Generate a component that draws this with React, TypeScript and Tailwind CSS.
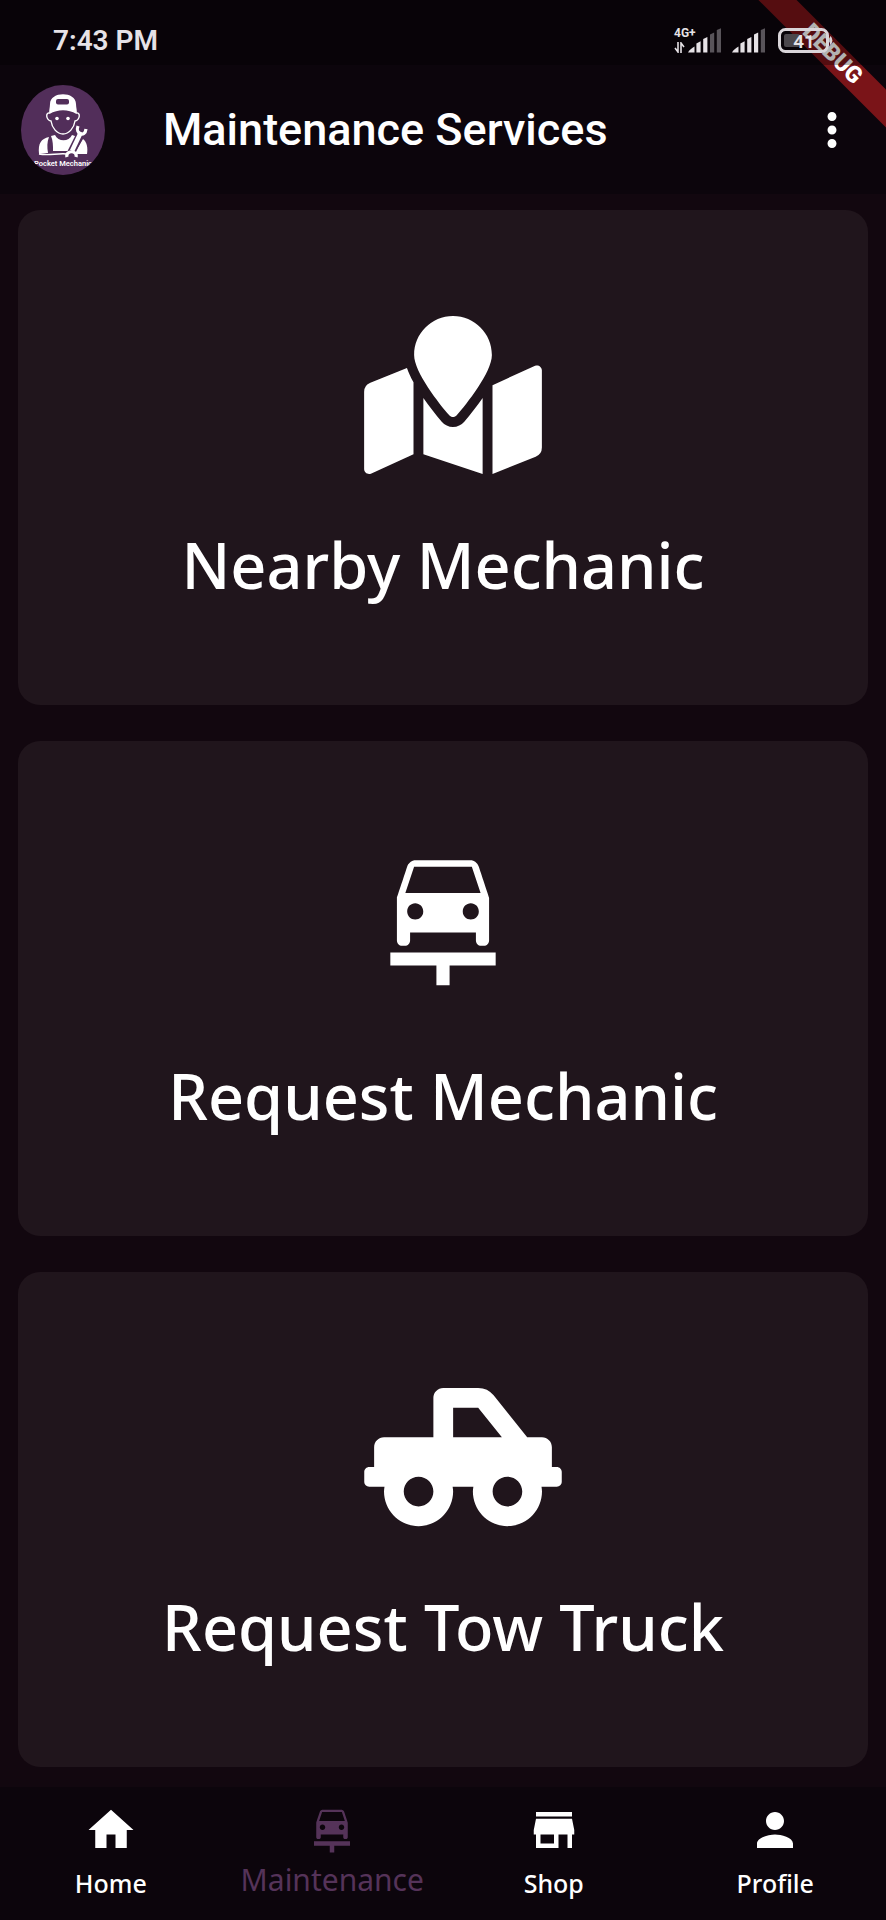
import { FaMapMarked, FaTruckPickup } from "react-icons/fa";
import { MdCarRepair, MdHome, MdStore, MdPerson, MdMoreVert } from "react-icons/md";

const cards = [
  { label: "Nearby Mechanic", icon: <FaMapMarked className="h-[158px] w-[178px] shrink-0" /> },
  { label: "Request Mechanic", icon: <MdCarRepair viewBox="0 1 24 24" className="size-[158px] shrink-0" /> },
  { label: "Request Tow Truck", icon: <FaTruckPickup className="h-[158px] w-[198px] shrink-0" /> },
];

const tabs = [
  { label: "Home", Icon: MdHome, active: false },
  { label: "Maintenance", Icon: MdCarRepair, active: true },
  { label: "Shop", Icon: MdStore, active: false },
  { label: "Profile", Icon: MdPerson, active: false },
];

function Signal({ lit }: { lit: number }) {
  return (
    <svg viewBox="0 0 34 25" className="h-[25px] w-[34px]" aria-hidden="true">
      <path d="M0 24.5C1 22 4 20 6.500 18.500V24.500Z" fill="#e6e2e6" />
      {[1, 2, 3, 4].map((i) => (
        <path
          key={i}
          d={`M${i * 6.8 + 1.6} 24.500V${20 - i * 4.500}L${i * 6.8 + 5.8} ${17.500 - i * 4.300}V24.500Z`}
          fill={i < lit ? "#e6e2e6" : "#59545a"}
        />
      ))}
    </svg>
  );
}

function Battery() {
  return (
    <svg viewBox="0 0 57 25" className="h-[25px] w-[57px]" role="img" aria-label="Battery 41 percent">
      <rect x="1.500" y="1.500" width="48" height="22" rx="6" fill="none" stroke="#d9d5d9" strokeWidth="3" />
      <rect x="6" y="6" width="16" height="13" rx="2" fill="#4b474c" />
      <path d="M52 8C55 9 55 16 52 17Z" fill="#d9d5d9" />
      <text x="26" y="19.500" textAnchor="middle" fontSize="19" fontWeight="600" fill="#e6e2e6">41</text>
    </svg>
  );
}

function Logo() {
  return (
    <svg viewBox="0 0 84 90" className="h-[90px] w-[84px] shrink-0" role="img" aria-label="Pocket Mechanic">
      <defs>
        <clipPath id="disc"><ellipse cx="42" cy="45" rx="42" ry="45" /></clipPath>
      </defs>
      <g clipPath="url(#disc)">
        <rect width="84" height="90" fill="#522e5a" />
        <path d="M28.500 29C27.500 26 29 23 29 19C29 6 55 6 55 19C55 23 56.500 26 55.500 29C47 24 37 24 28.500 29Z" fill="#fff" />
        <rect x="35" y="14" width="13" height="5.500" rx="2" fill="#522e5a" />
        <path d="M29 28C24 27 25 35 30 36C31 43 36 49 42 49S53 43 54 36C59 35 60 27 55 28" fill="none" stroke="#fff" strokeWidth="1.400" />
        <circle cx="36" cy="33.500" r="1.800" fill="#fff" />
        <circle cx="47" cy="33.500" r="1.800" fill="#fff" />
        <path d="M18 69C17 58 20 54 28 52C26 57 26 62 27 68Z" fill="#fff" />
        <path d="M30 51L34 50C37 57 48 57 51 50L57 52L47 66H32C32 60 32 56 30 51Z" fill="#fff" />
        <path d="M18 69C28 71 36 68 46 69" fill="none" stroke="#fff" strokeWidth="1.500" />
        <path d="M62 54C66 57 67 63 66 69H53Z" fill="#fff" />
        <path d="M60 48L50 68" stroke="#522e5a" strokeWidth="8" />
        <path d="M60 47L51 66" stroke="#fff" strokeWidth="4.500" />
        <path d="M57 41C54 49 64 53 65 44M46 72C44 65 57 65 55 72" fill="none" stroke="#fff" strokeWidth="3.200" />
        <circle cx="50.500" cy="71" r="2" fill="#522e5a" />
        <text x="42" y="81" textAnchor="middle" fontSize="7.500" fontWeight="600" fill="#fff">Pocket Mechanic</text>
      </g>
    </svg>
  );
}

export default function App() {
  return (
    <div className="relative flex min-h-screen flex-col overflow-hidden bg-[#12070f] font-['Noto_Sans',sans-serif] text-white">
      <div className="absolute top-[41px] right-[-46px] z-10 flex h-[27px] w-[200px] rotate-45 items-center justify-center bg-[#7a1418] font-['Roboto',sans-serif] text-[23px] font-black">
        DEBUG
      </div>
      <div className="bg-[#0c050c]">
        <div className="relative z-20 flex h-[65px] items-center justify-between bg-black/30 pt-4 pr-[51px] pl-[53px] font-['Roboto',sans-serif] text-[#e6e2e6]">
          <span className="text-[28px] font-semibold">7:43 PM</span>
          <div className="flex items-center">
            <div className="relative mr-2.5 flex w-12 justify-end">
              <div className="absolute top-0 left-0 flex flex-col gap-1">
                <span className="text-[12px] leading-[10px] font-bold">4G+</span>
                <svg viewBox="0 0 12 11" className="h-[11px] w-3" aria-hidden="true">
                  <path d="M4 0V10L1 6M7 11V1L10 5" fill="none" stroke="currentColor" strokeWidth="1.600" />
                </svg>
              </div>
              <Signal lit={3} />
            </div>
            <div className="mr-3"><Signal lit={4} /></div>
            <Battery />
          </div>
        </div>
      </div>
      <header className="flex h-[129px] items-center bg-[#0c050c] pr-[27px] pl-[21px] font-['Roboto',sans-serif]">
        <Logo />
        <h1 className="ml-[58px] flex-1 text-[45px] font-medium">Maintenance Services</h1>
        <button type="button" aria-label="More options"><MdMoreVert className="size-[54px]" /></button>
      </header>
      <main className="flex flex-1 flex-col gap-9 px-[18px] pt-4 pb-5">
        {cards.map(({ label, icon }) => (
          <button key={label} type="button" className="flex h-[495px] flex-col items-center rounded-[22px] bg-[#20151c] pt-[106px]">
            <span className="flex w-[158px] justify-start">{icon}</span>
            <span className="mt-12 text-[63px] leading-[86px] font-medium">{label}</span>
          </button>
        ))}
      </main>
      <nav className="grid h-[133px] grid-cols-4 bg-[#0c050c]">
        {tabs.map(({ label, Icon, active }) => (
          <a key={label} href="#" className={`flex flex-col items-center pt-4 ${active ? "text-[#553359]" : ""}`}>
            <Icon className="size-[54px]" />
            <span className={active ? "text-[30px] leading-[46px]" : "text-[25px] leading-[52px] font-medium"}>{label}</span>
          </a>
        ))}
      </nav>
    </div>
  );
}
